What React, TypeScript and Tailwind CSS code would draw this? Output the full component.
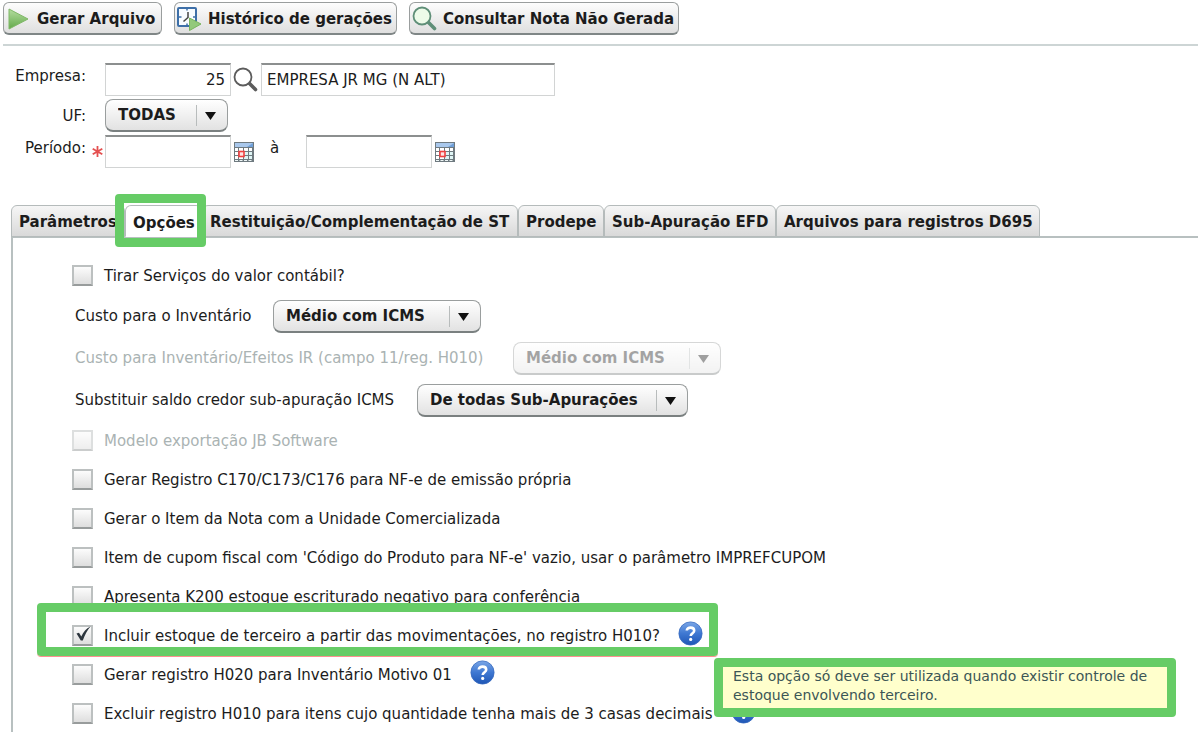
import React, { useState } from 'react';

const PlayIcon = () => (
  <svg width="21" height="22" viewBox="0 0 21 22" className="shrink-0">
    <defs>
      <linearGradient id="play" x1="0" y1="0" x2="0" y2="1">
        <stop offset="0" stopColor="#b5dda0" />
        <stop offset="1" stopColor="#62a94a" />
      </linearGradient>
    </defs>
    <path d="M1 1L20 11L1 21Z" fill="url(#play)" stroke="#7fb867" strokeWidth="1" />
  </svg>
);

const HistoryIcon = () => (
  <svg width="25" height="25" viewBox="0 0 25 25" className="shrink-0">
    <rect x="1" y="2" width="18" height="18" rx="1" fill="#f7fbff" stroke="#3d6fa8" strokeWidth="2" />
    <path d="M10 2v2.500M10 17.500v2.500M2 11h2.500M16 11h2.500" stroke="#3d6fa8" strokeWidth="1.500" />
    <path d="M11 6V11.500L6.500 15.500" fill="none" stroke="#444" strokeWidth="1.500" />
    <path d="M12.500 12L24 18L12.500 24.500Z" fill="#93c97b" stroke="#78b45e" />
  </svg>
);

const SearchIcon = ({ color, fill }: { color: string; fill: string }) => (
  <svg width="25" height="25" viewBox="0 0 25 25" className="shrink-0">
    <path d="M15.500 15.500L22.500 22.500" stroke={color} strokeWidth="3.600" strokeLinecap="round" />
    <circle cx="10" cy="10" r="8.500" fill={fill} stroke={color} strokeWidth="1.800" />
  </svg>
);

const CalendarIcon = () => (
  <svg width="20" height="20" viewBox="0 0 20 20" className="shrink-0">
    <rect width="20" height="20" fill="#6f7a80" />
    <rect x="1" y="1" width="18" height="4" fill="#a9c8ec" />
    <path d="M19 1v4h-6Z" fill="#6f9fd8" />
    {[6, 10, 14].map((y) =>
      [1, 5, 10, 15].map((x) => (
        <rect key={`${x}-${y}`} x={x} y={y} width={x === 5 || x === 10 ? 4 : 3} height={3} fill={x > 8 && y > 9 ? '#dff5f5' : '#fff'} />
      ))
    )}
    <path d="M1 18.500H19" stroke="#eef6f6" strokeDasharray="3 1.500" />
    <rect x="5" y="9.500" width="5" height="5" fill="#ffe3e3" stroke="#f04040" strokeWidth="1.600" />
  </svg>
);

const HelpIcon = () => (
  <svg width="25" height="25" viewBox="0 0 25 25" className="block">
    <defs>
      <linearGradient id="help" x1="0" y1="0" x2="0" y2="1">
        <stop offset="0" stopColor="#7aa6e6" />
        <stop offset="0.500" stopColor="#3f78d2" />
        <stop offset="1" stopColor="#1f56b5" />
      </linearGradient>
    </defs>
    <circle cx="12.500" cy="12.500" r="11.600" fill="url(#help)" stroke="#3a6cc0" strokeWidth="0.800" />
    <path d="M8.800 9.600C8.800 5.600 16.200 5.600 16.200 9.700C16.200 12.200 12.700 12.200 12.700 15" fill="none" stroke="#fff" strokeWidth="2.600" />
    <circle cx="12.700" cy="18.400" r="1.600" fill="#fff" />
  </svg>
);

const ToolButton = ({ icon, className, children }: { icon: React.ReactNode; className: string; children: React.ReactNode }) => (
  <button
    type="button"
    className={`flex h-[33px] items-center whitespace-nowrap rounded-md border border-[#9a9e9e] border-b-2 border-b-[#7f8686] bg-linear-to-b from-[#fdfdfd] to-[#dfdfdf] pt-px font-bold ${className}`}
  >
    {icon}
    {children}
  </button>
);

interface PickerProps {
  id: string;
  label: string;
  value: string;
  className: string;
  disabled?: boolean;
}

const Picker = ({ id, label, value, className, disabled }: PickerProps) => (
  <div className={`relative h-[33px] ${className} ${disabled ? 'opacity-40' : ''}`}>
    <select
      id={id}
      aria-label={label}
      disabled={disabled}
      className="h-full w-full appearance-none rounded-lg border border-[#9a9e9e] border-b-2 border-b-[#7a8080] bg-linear-to-b from-white to-[#e2e2e2] pl-3 pr-8 font-bold opacity-100"
    >
      <option>{value}</option>
    </select>
    <svg width="26" height="22" viewBox="0 0 26 22" className="pointer-events-none absolute right-2 top-1.5">
      <path d="M2.500 0V21" stroke="#b8bcbc" />
      <path d="M11 7H22L16.500 15Z" fill="#111" />
    </svg>
  </div>
);

const TextBox = ({ className, ...props }: React.InputHTMLAttributes<HTMLInputElement>) => (
  <input
    type="text"
    className={`h-[33px] border border-[#d2d4d4] border-t-2 border-t-[#8c8f8f] bg-white px-[5px] ${className}`}
    {...props}
  />
);

interface CheckRowProps {
  label: string;
  initial?: boolean;
  disabled?: boolean;
  help?: boolean;
  children?: React.ReactNode;
}

const CheckRow = ({ label, initial = false, disabled, help, children }: CheckRowProps) => {
  const [checked, setChecked] = useState(initial);
  return (
    <div className="relative flex h-[39px] items-center">
      <label className={`flex items-center whitespace-nowrap ${disabled ? 'text-[#aab3b3]' : ''}`}>
        <span className="relative mr-[11px] block size-[21px]">
          <input
            type="checkbox"
            checked={checked}
            disabled={disabled}
            onChange={() => setChecked(!checked)}
            className="block size-full appearance-none border-2 border-[#bcc0c0] border-b-[#989c9c] bg-linear-to-b from-[#fcfcfc] to-[#dedede] disabled:opacity-50"
          />
          {checked && (
            <svg viewBox="0 0 21 21" className="pointer-events-none absolute inset-0">
              <path d="M4.500 8.500L7 7.800L9.300 11.500C11.500 6.800 14 3.500 18.500 1.500C15.500 5 13 9.500 10.800 15.500H8.800Z" fill="#2c353d" />
            </svg>
          )}
        </span>
        {label}
      </label>
      {help && (
        <button type="button" aria-label="Ajuda" className="mb-1 ml-[18px]">
          <HelpIcon />
        </button>
      )}
      {children}
    </div>
  );
};

const tabs = [
  { name: 'Parâmetros', width: 'w-[114px]' },
  { name: 'Opções', width: 'w-[77px]' },
  { name: 'Restituição/Complementação de ST', width: 'w-[316px]' },
  { name: 'Prodepe', width: 'w-[86px]' },
  { name: 'Sub-Apuração EFD', width: 'w-[172px]' },
  { name: 'Arquivos para registros D695', width: 'w-[264px]' },
];

export default function App() {
  return (
    <div className="flex h-screen flex-col overflow-hidden bg-white font-['DejaVu_Sans',Verdana,sans-serif] text-[15px] leading-5 text-[#1c1c1c]">
      <div className="ml-[3px] flex gap-3 border-b-2 border-[#cdd5d5] pt-[2px] pb-[9px]">
        <ToolButton icon={<PlayIcon />} className="w-[159px] gap-2 pl-1">Gerar Arquivo</ToolButton>
        <ToolButton icon={<HistoryIcon />} className="w-[223px] gap-[6px] pl-[2px]">Histórico de gerações</ToolButton>
        <ToolButton icon={<SearchIcon color="#5f8f78" fill="#edfbe9" />} className="w-[270px] gap-[6px] pl-[2px]">Consultar Nota Não Gerada</ToolButton>
      </div>

      <form className="mt-[17px] flex flex-col gap-[3px]">
        <div className="flex items-center">
          <label htmlFor="empresa" className="mr-[19px] mb-2 w-[86px] text-right">Empresa:</label>
          <TextBox id="empresa" defaultValue="25" className="w-[126px] text-right" />
          <button type="button" aria-label="Pesquisar empresa" className="mx-[2px]">
            <SearchIcon color="#5c5c5c" fill="#fff" />
          </button>
          <TextBox aria-label="Nome da empresa" defaultValue="EMPRESA JR MG (N ALT)" className="ml-[1px] w-[294px]" />
        </div>
        <div className="flex items-center">
          <label htmlFor="uf" className="mr-[19px] w-[86px] text-right">UF:</label>
          <Picker id="uf" label="UF" value="TODAS" className="w-[123px]" />
        </div>
        <div className="flex items-center">
          <label htmlFor="inicio" className="mb-2 w-[86px] text-right">Período:</label>
          <svg width="11" height="11" viewBox="0 0 11 11" className="ml-[6px] mr-[2px]">
            <path d="M5.500 0V11M0.700 2.700L10.300 8.300M10.300 2.700L0.700 8.300" stroke="#e45050" strokeWidth="1.800" />
          </svg>
          <TextBox id="inicio" className="w-[126px]" />
          <button type="button" aria-label="Abrir calendário inicial" className="ml-[3px]"><CalendarIcon /></button>
          <label htmlFor="fim" className="mx-4 mb-2 w-5">à</label>
          <TextBox id="fim" aria-label="Fim do período" className="w-[126px]" />
          <button type="button" aria-label="Abrir calendário final" className="ml-[3px]"><CalendarIcon /></button>
        </div>
      </form>

      <div role="tablist" className="relative z-10 mt-[37px] ml-[11px] flex">
        {tabs.map(({ name, width }) => {
          const active = name === 'Opções';
          return (
            <div key={name} className={`relative ${width} ${active ? 'z-10' : ''}`}>
              <button
                type="button"
                role="tab"
                aria-selected={active}
                className={`h-8 w-full whitespace-nowrap rounded-t-md border border-[#b5bbbb] pl-[7px] text-left font-bold ${
                  active ? 'border-b-white bg-white pt-1' : 'bg-linear-to-b from-[#f6f6f6] to-[#d9d9d9] pt-0.5'
                }`}
              >
                {name}
              </button>
              {active && <div className="pointer-events-none absolute -top-[11px] -right-[4px] -bottom-[10px] -left-[10px] rounded-[4px] border-[9px] border-[#66cc66]" />}
            </div>
          );
        })}
      </div>

      <main className="-mt-px ml-[11px] flex-1 border-t-2 border-l-2 border-[#b8c0c0] pt-[18px] pl-[59px]">
        <CheckRow label="Tirar Serviços do valor contábil?" />
        <div className="flex h-[42px] items-center gap-5 pl-[3px]">
          <label htmlFor="custo" className="min-w-[178px]">Custo para o Inventário</label>
          <Picker id="custo" label="Custo para o Inventário" value="Médio com ICMS" className="w-[208px]" />
        </div>
        <div className="flex h-[42px] items-center gap-5 pl-[3px]">
          <label htmlFor="custo-ir" className="min-w-[418px] text-[#aab3b3]">Custo para Inventário/Efeitos IR (campo 11/reg. H010)</label>
          <Picker id="custo-ir" label="Custo para Inventário/Efeitos IR" value="Médio com ICMS" className="w-[208px]" disabled />
        </div>
        <div className="flex h-[42px] items-center gap-5 pl-[3px]">
          <label htmlFor="saldo" className="min-w-[322px]">Substituir saldo credor sub-apuração ICMS</label>
          <Picker id="saldo" label="Substituir saldo credor" value="De todas Sub-Apurações" className="w-[271px]" />
        </div>
        <CheckRow label="Modelo exportação JB Software" disabled />
        <CheckRow label="Gerar Registro C170/C173/C176 para NF-e de emissão própria" />
        <CheckRow label="Gerar o Item da Nota com a Unidade Comercializada" />
        <CheckRow label="Item de cupom fiscal com 'Código do Produto para NF-e' vazio, usar o parâmetro IMPREFCUPOM" />
        <CheckRow label="Apresenta K200 estoque escriturado negativo para conferência" />
        <CheckRow label="Incluir estoque de terceiro a partir das movimentações, no registro H010?" initial help>
          {/* Highlight around the option */}
          <div className="pointer-events-none absolute -top-[13px] -left-[35px] h-[53px] w-[681px] rounded-[4px] border-[9px] border-[#66cc66] shadow-[0_1px_0_#ff9090]" />
          {/* Help balloon */}
          <div role="tooltip" className="absolute top-[42px] left-[642px] z-10 w-[462px] rounded-[4px] border-[9px] border-[#66cc66] bg-[#ffffcc] pl-[10px] pb-[3px] text-[14px] leading-[19px] text-[#3c5656]">
            Esta opção só deve ser utilizada quando existir controle de estoque envolvendo terceiro.
          </div>
        </CheckRow>
        <CheckRow label="Gerar registro H020 para Inventário Motivo 01" help />
        <CheckRow label="Excluir registro H010 para itens cujo quantidade tenha mais de 3 casas decimais" help />
      </main>
    </div>
  );
}
